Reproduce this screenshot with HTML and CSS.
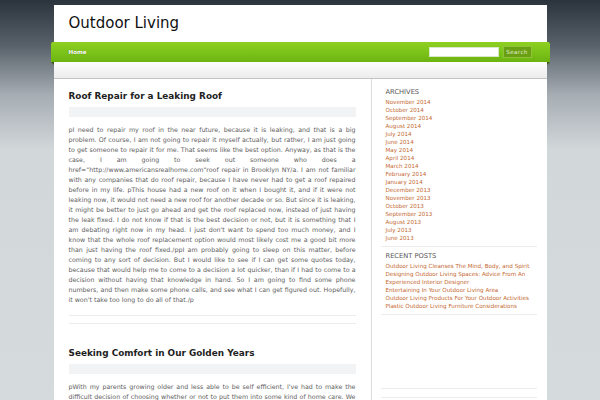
FILE: index.html
```html
<!DOCTYPE html>
<html>
<head>
<meta charset="utf-8">
<link rel="stylesheet" href="styles.css">
</head>
<body>
<div class="page">
  <div class="header"><h1 class="site-title">Outdoor Living</h1></div>
  <div class="nav">
    <a class="nav-link" href="#">Home</a>
    <form class="search">
      <input class="search-input" type="text">
      <button class="search-btn" type="button">Search</button>
    </form>
  </div>
  <div class="subbar"></div>
  <div class="content">
    <div class="main">
      <div class="post">
        <h2 class="post-title">Roof Repair for a Leaking Roof</h2>
        <div class="post-bar"></div>
        <p class="post-text">pI need to repair my roof in the near future, because it is leaking, and that is a big problem. Of course, I am not going to repair it myself actually, but rather, I am just going to get someone to repair it for me. That seems like the best option. Anyway, as that is the case, I am going to seek out someone who does a href="http://www.americansrealhome.com"roof repair in Brooklyn NY/a. I am not familiar with any companies that do roof repair, because I have never had to get a roof repaired before in my life. pThis house had a new roof on it when I bought it, and if it were not leaking now, it would not need a new roof for another decade or so. But since it is leaking, it might be better to just go ahead and get the roof replaced now, instead of just having the leak fixed. I do not know if that is the best decision or not, but it is something that I am debating right now in my head. I just don't want to spend too much money, and I know that the whole roof replacement option would most likely cost me a good bit more than just having the roof fixed./ppI am probably going to sleep on this matter, before coming to any sort of decision. But I would like to see if I can get some quotes today, because that would help me to come to a decision a lot quicker, than if I had to come to a decision without having that knowledge in hand. So I am going to find some phone numbers, and then make some phone calls, and see what I can get figured out. Hopefully, it won't take too long to do all of that./p</p>
        <div class="post-foot"></div>
      </div>
      <div class="post">
        <h2 class="post-title">Seeking Comfort in Our Golden Years</h2>
        <div class="post-bar"></div>
        <p class="post-text">pWith my parents growing older and less able to be self efficient, I've had to make the difficult decision of choosing whether or not to put them into some kind of home care. We have looked at a number of options and thought long about what would be best for them.</p>
      </div>
    </div>
    <div class="sidebar">
      <div class="widget first">
        <h3 class="widget-title">ARCHIVES</h3>
        <ul class="links">
          <li><a href="#">November 2014</a></li>
          <li><a href="#">October 2014</a></li>
          <li><a href="#">September 2014</a></li>
          <li><a href="#">August 2014</a></li>
          <li><a href="#">July 2014</a></li>
          <li><a href="#">June 2014</a></li>
          <li><a href="#">May 2014</a></li>
          <li><a href="#">April 2014</a></li>
          <li><a href="#">March 2014</a></li>
          <li><a href="#">February 2014</a></li>
          <li><a href="#">January 2014</a></li>
          <li><a href="#">December 2013</a></li>
          <li><a href="#">November 2013</a></li>
          <li><a href="#">October 2013</a></li>
          <li><a href="#">September 2013</a></li>
          <li><a href="#">August 2013</a></li>
          <li><a href="#">July 2013</a></li>
          <li><a href="#">June 2013</a></li>
        </ul>
      </div>
      <div class="widget">
        <h3 class="widget-title">RECENT POSTS</h3>
        <ul class="links">
          <li><a href="#">Outdoor Living Cleanses The Mind, Body, and Spirit</a></li>
          <li><a href="#">Designing Outdoor Living Spaces: Advice From An Experienced Interior Designer</a></li>
          <li><a href="#">Entertaining In Your Outdoor Living Area</a></li>
          <li><a href="#">Outdoor Living Products For Your Outdoor Activities</a></li>
          <li><a href="#">Plastic Outdoor Living Furniture Considerations</a></li>
        </ul>
      </div>
      <div class="widget empty"></div>
    </div>
  </div>
</div>
</body>
</html>
```
FILE: styles.css
```css
html, body {
  margin: 0;
  padding: 0;
}
body {
  background: linear-gradient(to bottom, #2b333d 0px, #58616a 45px, #a6adb3 95px, #d2d7da 150px, #d5dadd 400px);
  background-color: #d5dadd;
  font-family: "DejaVu Sans", Verdana, sans-serif;
  height: 400px;
  overflow: hidden;
}
.page {
  width: 493px;
  margin: 5px auto 0;
}
.header {
  background: #fff;
  height: 37px;
  display: flex;
  align-items: center;
  padding-left: 15px;
}
.site-title {
  margin: 0;
  font-weight: normal;
  font-size: 15px;
  color: #111;
  line-height: 18px;
  padding-bottom: 1px;
}
.nav {
  position: relative;
  margin: 0 -3px;
  height: 20px;
  background: linear-gradient(to bottom, #8fd021 0%, #7cc31a 50%, #6cb311 100%);
  display: flex;
  align-items: center;
  padding: 0 18px 0 18px;
  border-radius: 2px 2px 0 0;
}
.nav::before, .nav::after {
  content: "";
  position: absolute;
  bottom: -3px;
  width: 0;
  height: 0;
  border-top: 3px solid #3d5a10;
}
.nav::before {
  left: 0;
  border-left: 3px solid transparent;
}
.nav::after {
  right: 0;
  border-right: 3px solid transparent;
}
.nav-link {
  color: #fff;
  font-size: 5.6px;
  font-weight: bold;
  text-decoration: none;
  text-shadow: 0 0 1px #4d7d0a;
}
.search {
  margin: 0 0 0 auto;
  display: flex;
  align-items: center;
  gap: 4px;
}
.search-input {
  width: 70px;
  height: 10px;
  box-sizing: border-box;
  border: 1px solid #d8e8c8;
  background: #fff;
  padding: 0;
  margin: 0;
}
.search-btn {
  height: 12px;
  width: 29px;
  box-sizing: border-box;
  margin: 0;
  padding: 0;
  border: 1px solid #8fc43a;
  background: #6a9f13;
  color: #e4f0d2;
  font-family: "DejaVu Sans", Verdana, sans-serif;
  font-size: 5.6px;
  letter-spacing: 0.4px;
  line-height: 10px;
}
.subbar {
  height: 16px;
  background: linear-gradient(to bottom, #fdfdfd, #ececec);
  border-bottom: 1px solid #c1c5c8;
}
.content {
  display: flex;
  background: #fff;
  min-height: 330px;
}
.main {
  width: 287px;
  padding: 0 15px;
  border-right: 1px solid #dcdcdc;
}
.post {
  padding-top: 11px;
}
.post-title {
  margin: 0;
  font-size: 8.9px;
  line-height: 12px;
  font-weight: bold;
  color: #1e1e1e;
}
.post-bar {
  margin-top: 5px;
  height: 10px;
  background: #f1f3f4;
}
.post-text {
  margin: 8px 0 0;
  font-size: 6.3px;
  line-height: 10px;
  color: #606060;
  text-align: justify;
}
.post-foot {
  margin-top: 10px;
  height: 7px;
  border-top: 1px solid #ececec;
  border-bottom: 1px solid #ececec;
  margin-bottom: 12px;
}
.sidebar {
  flex: 1;
  padding: 4px 10px 0 9px;
}
.widget {
  padding: 4px 0 4px 5px;
  border-bottom: 1px solid #ececec;
}
.widget.empty {
  margin-top: 73px;
  height: 8px;
  border-top: 1px solid #ececec;
  padding: 0;
}
.widget-title {
  margin: 0;
  font-size: 6.7px;
  line-height: 10px;
  font-weight: normal;
  color: #555;
}
.links {
  list-style: none;
  margin: 1px 0 0;
  padding: 0;
}
.links li {
  font-size: 5.6px;
  line-height: 8px;
}
.links a {
  color: #c4672f;
  text-decoration: none;
}
```
